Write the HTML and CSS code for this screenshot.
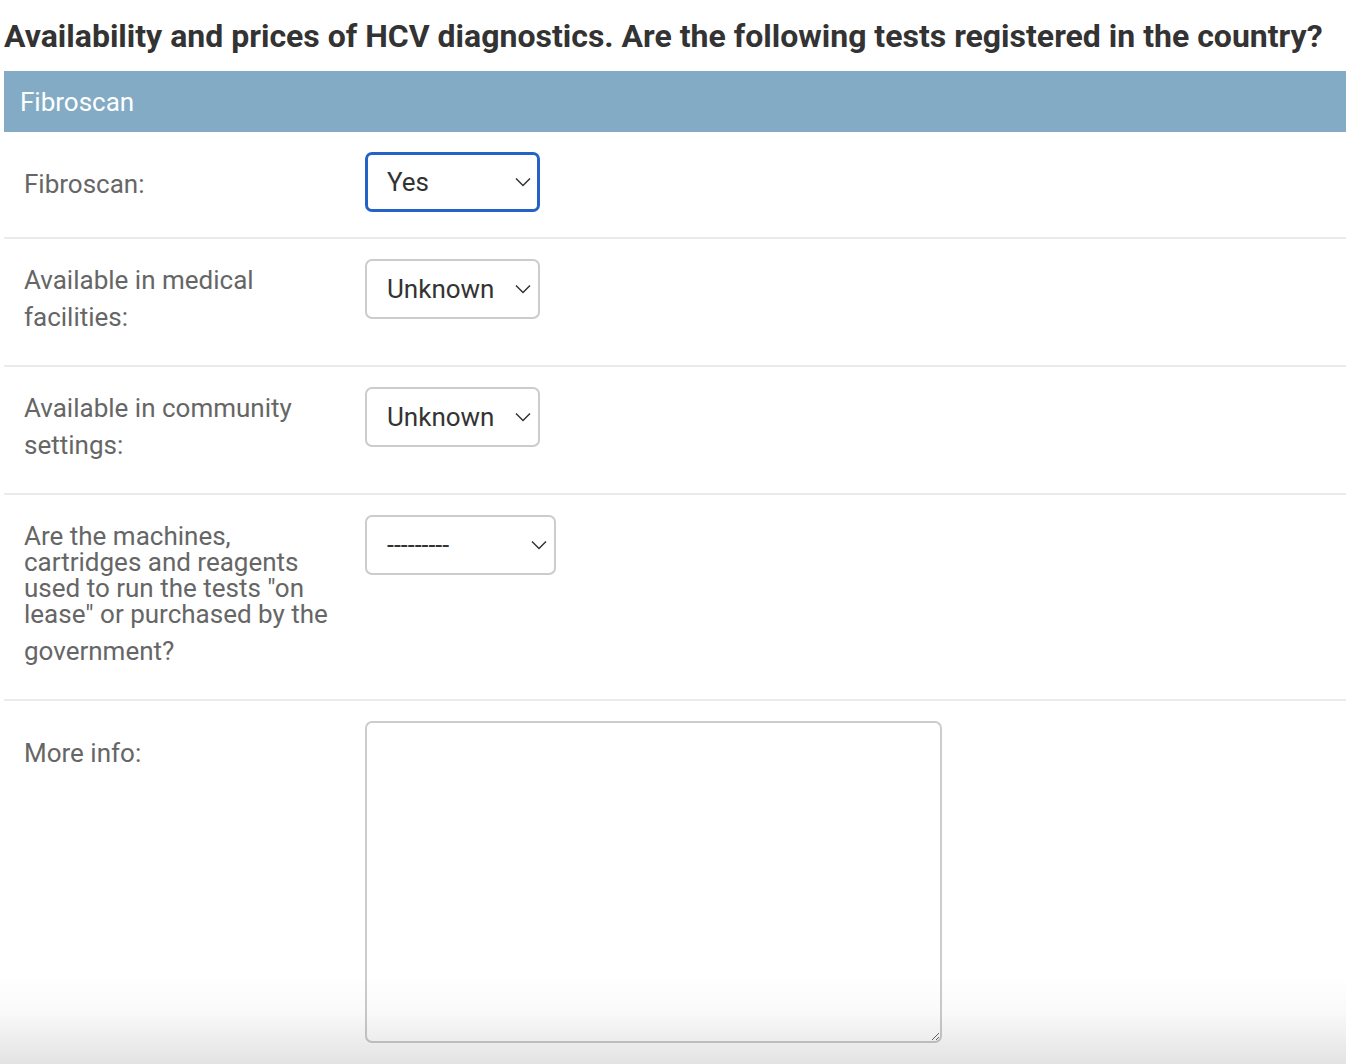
FILE: index.html
```html
<!DOCTYPE html>
<html lang="en">
<head>
<meta charset="utf-8">
<title>HCV diagnostics</title>
<link rel="stylesheet" href="styles.css">
</head>
<body>
<div class="page">
  <h2 class="title">Availability and prices of HCV diagnostics. Are the following tests registered in the country?</h2>
  <fieldset class="module">
    <div class="module-head">Fibroscan</div>
    <div class="row">
      <label class="label label-single">Fibroscan:</label>
      <div class="select-wrap sel-sm focused">
        <select class="select"><option>Yes</option></select>
        <svg class="chev" viewBox="0 0 16 10" width="16" height="10"><path d="M1 1.5 L8 8.5 L15 1.5" fill="none" stroke="#333" stroke-width="1.5"/></svg>
      </div>
    </div>
    <div class="row">
      <label class="label">Available in medical facilities:</label>
      <div class="select-wrap sel-sm">
        <select class="select"><option>Unknown</option></select>
        <svg class="chev" viewBox="0 0 16 10" width="16" height="10"><path d="M1 1.5 L8 8.5 L15 1.5" fill="none" stroke="#333" stroke-width="1.5"/></svg>
      </div>
    </div>
    <div class="row">
      <label class="label">Available in community settings:</label>
      <div class="select-wrap sel-sm">
        <select class="select"><option>Unknown</option></select>
        <svg class="chev" viewBox="0 0 16 10" width="16" height="10"><path d="M1 1.5 L8 8.5 L15 1.5" fill="none" stroke="#333" stroke-width="1.5"/></svg>
      </div>
    </div>
    <div class="row">
      <label class="label label-dense"><span class="dense">Are the machines, cartridges and reagents used to run the tests "on lease" or purchased by the</span><span class="last">government?</span></label>
      <div class="select-wrap sel-lg">
        <select class="select select-dash"><option>---------</option></select>
        <svg class="chev" viewBox="0 0 16 10" width="16" height="10"><path d="M1 1.5 L8 8.5 L15 1.5" fill="none" stroke="#333" stroke-width="1.5"/></svg>
      </div>
    </div>
    <div class="row row-last">
      <label class="label label-single">More info:</label>
      <textarea class="textarea"></textarea>
    </div>
  </fieldset>
</div>
<div class="footer-shade"></div>
</body>
</html>
```
FILE: styles.css
```css
html, body {
  margin: 0;
  padding: 0;
  background: #fff;
  font-family: Roboto, "Liberation Sans", sans-serif;
  color: #333;
}
.page {
  padding-left: 4px;
  overflow: hidden;
}
.title {
  margin: 0;
  padding-top: 17px;
  height: 71px;
  box-sizing: border-box;
  font-size: 32px;
  font-weight: 700;
  line-height: 38px;
  color: #333;
  white-space: nowrap;
}
.module {
  margin: 0;
  padding: 0;
  border: 0;
  min-width: 0;
}
.module-head {
  background: #83abc5;
  color: #fff;
  font-size: 26px;
  height: 61px;
  line-height: 62px;
  padding-left: 16px;
}
.row {
  display: flex;
  align-items: flex-start;
  border-bottom: 2px solid #ebebeb;
  padding: 20px 0 25px 20px;
}
.row-last {
  border-bottom: 0;
}
.label {
  width: 310px;
  margin-right: 31px;
  flex: none;
  color: #666;
  font-size: 26px;
  line-height: 37px;
  padding-top: 3px;
  padding-bottom: 4px;
}
.label-single {
  padding-top: 14px;
}
.label-dense {
  padding-top: 8px;
  padding-bottom: 4px;
}
.dense {
  display: block;
  line-height: 26px;
}
.last {
  display: block;
  line-height: 37px;
  margin-top: 6px;
}
.select-wrap {
  position: relative;
  flex: none;
  height: 60px;
}
.sel-sm { width: 175px; }
.sel-lg { width: 191px; }
.select {
  appearance: none;
  -webkit-appearance: none;
  width: 100%;
  height: 100%;
  box-sizing: border-box;
  border: 2px solid #cccccc;
  border-radius: 7px;
  background: #fff;
  font-family: Roboto, "Liberation Sans", sans-serif;
  font-size: 26px;
  color: #333;
  padding: 0 0 0 20px;
  margin: 0;
}
.select-dash {
  font-size: 25px;
}
.focused .select {
  border: 3px solid #2462c7;
  padding-left: 19px;
}
.chev {
  position: absolute;
  right: 9px;
  top: 25px;
  pointer-events: none;
}
.textarea {
  width: 577px;
  height: 322px;
  box-sizing: border-box;
  border: 2px solid #cccccc;
  border-radius: 7px;
  resize: both;
  background: #fff;
  margin: 0;
  flex: none;
}
.footer-shade {
  position: fixed;
  left: 0;
  right: 0;
  bottom: 0;
  height: 90px;
  background: linear-gradient(to bottom, rgba(0,0,0,0) 0%, rgba(0,0,0,0.02) 40%, rgba(0,0,0,0.11) 100%);
  pointer-events: none;
}
```
